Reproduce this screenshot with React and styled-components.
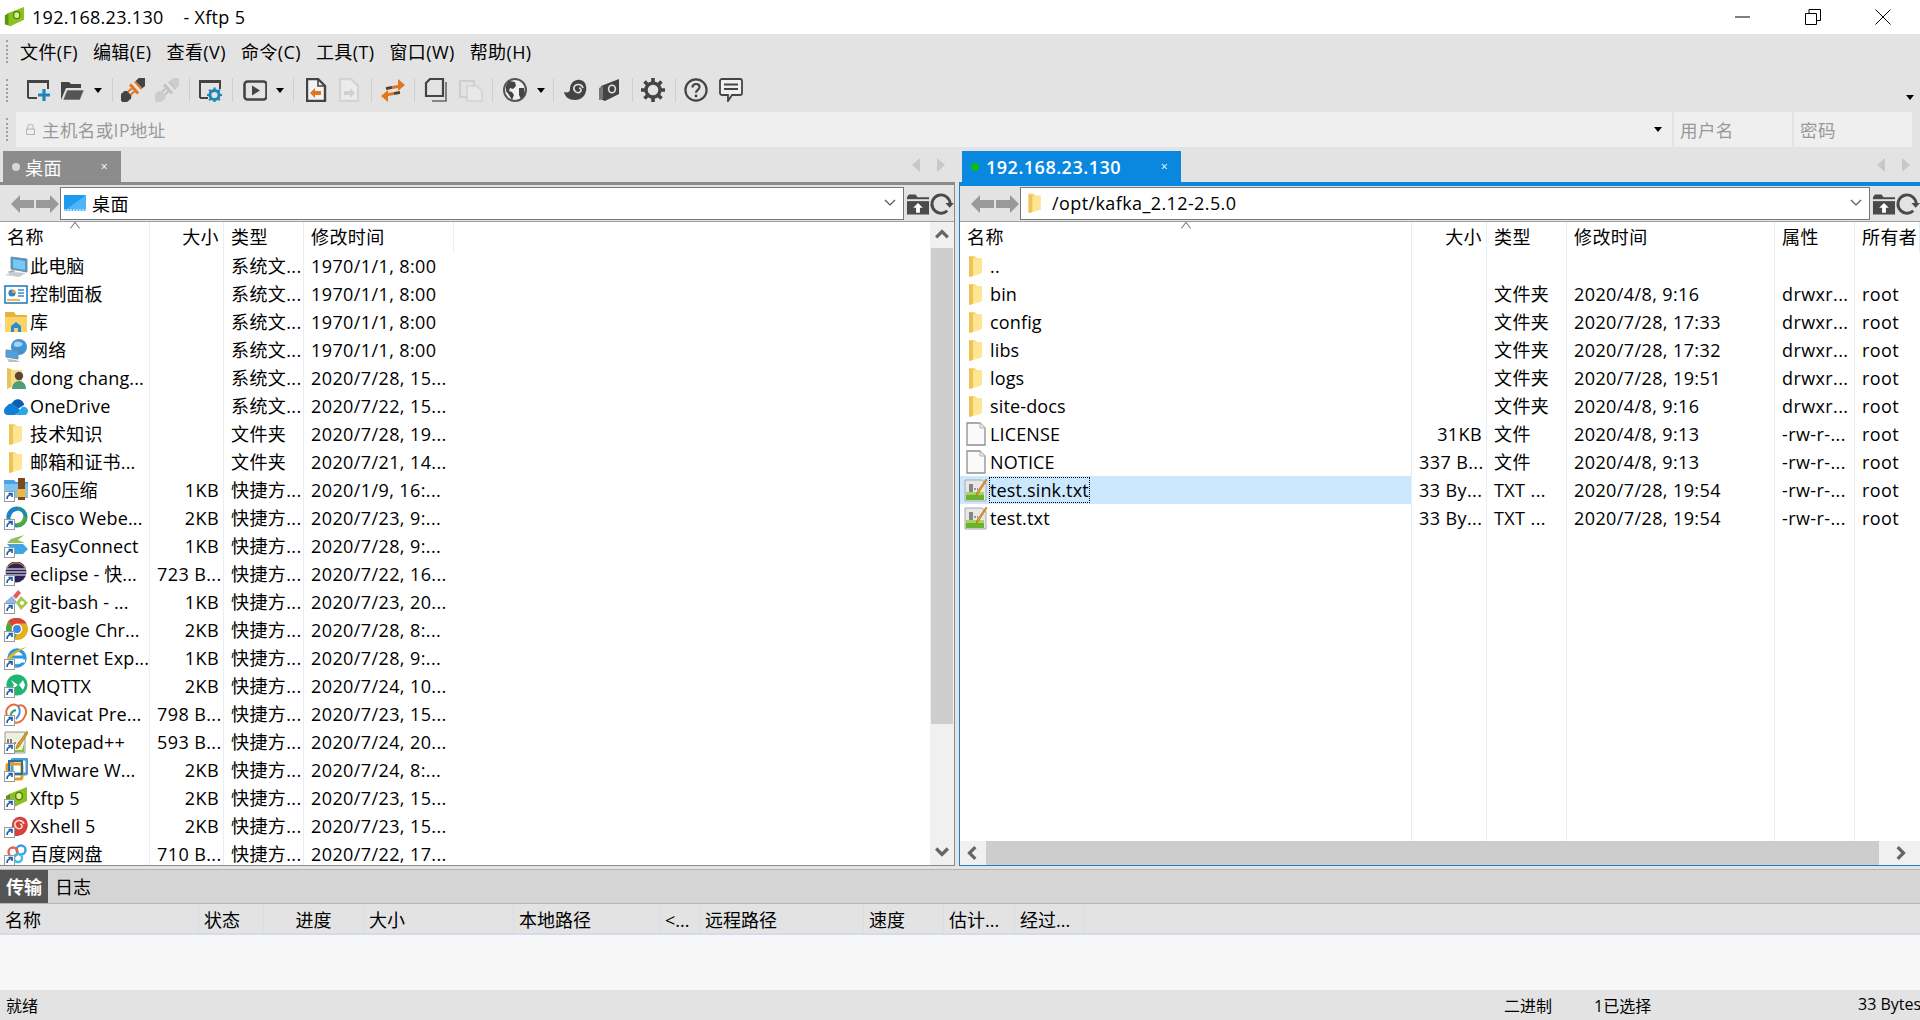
import styled, { createGlobalStyle } from "styled-components"

const GlobalStyle = createGlobalStyle`
  html, body { margin: 0; padding: 0; background: #e3e3e3; }
  body {
    font-family: "Open Sans", "Noto Sans CJK SC", sans-serif;
    font-size: 18px;
    letter-spacing: 0.4px;
    color: #000;
  }
  * { box-sizing: border-box; }
`

const DARK = "#444"
const ORANGE = "#e0771f"
const BLUE = "#1f86b8"

const plug = (body, accent) => (
  <g transform="rotate(-42 12 12)">
    <path d="M-3 7h8l2 2v6l-2 2h-8a3 3 0 01-1-1V8a3 3 0 011-1z" fill={body} />
    <path d="M7 10h5M7 14h5" stroke={accent} strokeWidth="2" />
    <rect x="12" y="6" width="3" height="12" fill={accent} />
    <rect x="18" y="7" width="2" height="10" fill={accent} />
    <path d="M20 7h5a4 4 0 014 4v2a4 4 0 01-4 4h-5z" fill={body} />
  </g>
)

/* ---- toolbar icons ---- */
const toolIcons = {
  newWin: (
    <>
      <path d="M2 20V3h20v8M2 20h9" fill="none" stroke={DARK} strokeWidth="2" />
      <rect x="2" y="2" width="20" height="3" fill={DARK} />
      <path d="M18 11v12M12 17h12" stroke={BLUE} strokeWidth="3.2" />
    </>
  ),
  open: (
    <>
      <path d="M1 22V4h8l2 2h10v4H6L1 22z" fill={DARK} />
      <path d="M3 22l4-10h17l-4 10z" fill="#555" stroke="#e3e3e3" strokeWidth=".6" />
    </>
  ),
  connect: plug(DARK, ORANGE),
  disconnect: plug("#cdcdcd", "#c2c2c2"),
  props: (
    <>
      <path d="M2 20V3h20v8M2 20h8" fill="none" stroke={DARK} strokeWidth="2" />
      <rect x="2" y="2" width="20" height="3" fill={DARK} />
      <circle cx="16.5" cy="17" r="4.6" fill="none" stroke={BLUE} strokeWidth="3" />
      <path d="M16.5 9.5v3M16.5 21.5v3M9 17h3M21 17h3M11.2 11.7l2 2M19.8 20.3l2 2M21.8 11.7l-2 2M13.2 20.3l-2 2" stroke={BLUE} strokeWidth="2.2" />
    </>
  ),
  play: (
    <>
      <rect x="1.5" y="3.5" width="22" height="18" rx="3" fill="none" stroke={DARK} strokeWidth="2.6" />
      <path d="M9 7.5l8 5-8 5z" fill={DARK} />
    </>
  ),
  fileIn: (
    <>
      <path d="M1 1h11l7 7v15H1z" fill="#f3f3f3" stroke={DARK} strokeWidth="2.4" />
      <path d="M12 1v7h7" fill="none" stroke={DARK} strokeWidth="1.6" />
      <path d="M4 15l5-5v3h6v4H9v3z" fill={ORANGE} />
    </>
  ),
  fileOut: (
    <>
      <path d="M1 1h11l7 7v15H1z" fill="#ececec" stroke="#d4d4d4" strokeWidth="2.4" />
      <path d="M16 15l-5-5v3H5v4h6v3z" fill="#d0d0d0" />
    </>
  ),
  transfer: (
    <>
      <path d="M5 9l12-2V1l7 6-7 6v-3L5 12z" fill={ORANGE} />
      <path d="M19 13L7 15v-3l-7 6 7 6v-6l12-2z" fill={ORANGE} />
      <path d="M5 10.500l6-1M13 15.500l6-1" stroke={DARK} strokeWidth="2.400" />
    </>
  ),
  copy: (
    <>
      <path d="M22 4v19H8" fill="none" stroke="#666" strokeWidth="1.6" />
      <path d="M2 5l4-4h13v17H2z" fill="none" stroke={DARK} strokeWidth="2.2" />
    </>
  ),
  paste: (
    <>
      <path d="M1 3h14v16H1z" fill="none" stroke="#cfcfcf" strokeWidth="2.2" />
      <path d="M8 8h10l5 5v10H8z" fill="#e9e9e9" stroke="#d2d2d2" strokeWidth="1.6" />
    </>
  ),
  globe: (
    <>
      <circle cx="12" cy="12" r="11" fill="#f0f0f0" stroke="#555" strokeWidth="2" />
      <path d="M6 3l6 1 1 4-3 3-3-1-1 3 3 1 2 3-2 5-3-5-3-4 0-5zM16 10l5 0 1 6-4 5-2-4z" fill={DARK} />
    </>
  ),
  shell: (
    <>
      <path d="M1 14c4 1 6 0 6-3 0-6 5-10 10-9 6 1 7 7 6 11-1 6-6 9-11 9-6 0-10-3-11-8z" fill={DARK} />
      <path d="M20 10c-1-4-7-5-9-1-1 4 3 7 6 5 2-1 1-4-1-4" fill="none" stroke="#e3e3e3" strokeWidth="1.6" />
    </>
  ),
  leaf: (
    <>
      <path d="M3 8l18-7v15L7 23l-5-2z" fill={DARK} />
      <path d="M1 10l4-2v13l-4 1z" fill="#777" />
      <ellipse cx="14" cy="11" rx="3.4" ry="3.8" fill="none" stroke="#e3e3e3" strokeWidth="1.6" />
    </>
  ),
  gear: (
    <>
      <circle cx="12" cy="12" r="7" fill="none" stroke={DARK} strokeWidth="3.4" />
      <path d="M12 0v5M12 19v5M0 12h5M19 12h5M3.5 3.5l3.5 3.5M17 17l3.5 3.5M20.5 3.5L17 7M7 17l-3.5 3.5" stroke={DARK} strokeWidth="3.6" />
    </>
  ),
  help: (
    <>
      <circle cx="12" cy="12" r="10.6" fill="none" stroke={DARK} strokeWidth="2.2" />
      <path d="M8.5 9.5c0-2.4 1.6-3.5 3.6-3.5s3.4 1.2 3.4 3c0 2.8-3.5 2.8-3.5 5.8" fill="none" stroke={DARK} strokeWidth="2.2" />
      <circle cx="12" cy="18" r="1.4" fill={DARK} />
    </>
  ),
  chat: (
    <>
      <path d="M3 1h18a2 2 0 012 2v12a2 2 0 01-2 2h-8l-4 6v-6H3a2 2 0 01-2-2V3a2 2 0 012-2z" fill="#f0f0f0" stroke={DARK} strokeWidth="1.8" />
      <path d="M5 6.5h14M5 11h14" stroke={DARK} strokeWidth="1.8" />
    </>
  ),
}

/* ---- file list icons ---- */
const fileIcons = {
  computer: (
    <>
      <path d="M7 3l16 2v13l-16-3z" fill="#3d9ad8" stroke="#8a8f96" />
      <path d="M9 5l12 2v9L9 14z" fill="#7cc7f2" />
      <path d="M1 21l8-3 13 1-7 4z" fill="#c7cbd0" />
      <path d="M3 18l6-2 3 1-6 2z" fill="#a9aeb4" />
    </>
  ),
  panel: (
    <>
      <rect x="1" y="4" width="22" height="17" fill="#fff" stroke="#2a7fbe" strokeWidth="1.6" />
      <circle cx="8" cy="11" r="3.6" fill="#2a85cc" />
      <path d="M8 11V7.4A3.6 3.6 0 0111.6 11z" fill="#f0a030" />
      <path d="M14 8h6M14 11h6M14 14h6" stroke="#3a8fd0" strokeWidth="1.5" />
      <path d="M3 18h13" stroke="#f0a030" strokeWidth="1.6" />
    </>
  ),
  library: (
    <>
      <path d="M1 2h9l2 3h11v17H1z" fill="#e9b23c" />
      <rect x="1" y="7" width="22" height="15" fill="#fbd466" />
      <path d="M7 16l5-4 5 4v6H7z" fill="#2b8ad8" />
      <rect x="10" y="18" width="4" height="4" fill="#fbd466" />
    </>
  ),
  network: (
    <>
      <circle cx="15" cy="9" r="8" fill="#3f93d6" />
      <path d="M10 5c3-2 6-2 9 1-2 3-6 4-9 2z" fill="#a5d4f2" />
      <path d="M2 12l12 1v8L2 19z" fill="#4aa3df" stroke="#7d8b96" />
      <path d="M3 21l9 1 4 2H5z" fill="#b9bec4" />
    </>
  ),
  user: (
    <>
      <path d="M3 2l6 2h9v14L3 23z" fill="#f9dd85" />
      <path d="M3 2l4 1v18l-4 2z" fill="#e8c25c" />
      <circle cx="15" cy="10" r="4.2" fill="#5b4435" />
      <path d="M8 23c0-5 3-8 7-8s7 3 7 8z" fill="#4f9e7b" />
    </>
  ),
  onedrive: (
    <>
      <path d="M8 9c2-4 7-5 10-2 2 2 2 3 2 4l-8 5-6-3z" fill="#0a5fb4" />
      <path d="M3 12c1-2 4-3 6-2l4 3 4 4-6 4H4c-3 0-4-2-4-4s1-4 3-5z" fill="#0f7fd4" />
      <path d="M12 21l6-8c2-1 5 0 6 3 0 3-1 5-4 5z" fill="#2aa7e8" />
    </>
  ),
  folder: (
    <>
      <path d="M5 2h5l3 2h5v15L5 23z" fill="#f7d36e" />
      <path d="M9 4h9v15L9 22z" fill="#fde594" />
      <path d="M5 2l4 2v18l-4 1z" fill="#eec255" />
    </>
  ),
  file: (
    <>
      <path d="M3 1h13l5 5v17H3z" fill="#fafafa" stroke="#8f8f8f" strokeWidth="1.3" />
      <path d="M16 1v5h5" fill="#eee" stroke="#b0b0b0" />
    </>
  ),
  notepad: (
    <>
      <path d="M1 2h17l4 3v18H1z" fill="#e8e8e8" stroke="#a8a8a8" />
      <rect x="2" y="14" width="18" height="8" fill="#6bb32e" />
      <path d="M2 14h18v3H2z" fill="#a7d65e" />
      <path d="M6 6v8M8 6v8M10 11h2M13 11h1" stroke="#444" strokeWidth="1.2" />
      <path d="M22 1l1 1-9 14-2 1 1-3z" fill="#e89a23" stroke="#a86a10" strokeWidth=".6" />
    </>
  ),
  zip: (
    <>
      <path d="M0 2h10l2 2h12v16H0z" fill="#4ba3e3" />
      <path d="M0 6h24v14H0z" fill="#7cc4f2" />
      <rect x="14" y="0" width="7" height="22" fill="#7d4a1e" />
      <rect x="13" y="11" width="9" height="8" fill="#e8b64a" />
    </>
  ),
  webex: (
    <>
      <circle cx="13" cy="11" r="8.6" fill="none" stroke="#1f8f9e" strokeWidth="4" />
      <path d="M5 11a8 8 0 018-8" fill="none" stroke="#1e7fd0" strokeWidth="4" />
      <path d="M21 11a8 8 0 01-8 8" fill="none" stroke="#5aa92f" strokeWidth="4" />
    </>
  ),
  easy: (
    <>
      <path d="M20 1L7 5l-4 4h18L14 6z" fill="#8fc25a" />
      <path d="M3 10h16l5 5-5 5H3l4-5z" fill="#3fa6e6" />
    </>
  ),
  eclipse: (
    <>
      <circle cx="12" cy="10" r="10.5" fill="#2c2255" />
      <path d="M2 7h20M1.5 10h21M2 13h20" stroke="#fff" strokeWidth="1.2" />
      <path d="M3 6a10.500 10.500 0 0118 0" fill="none" stroke="#f7941e" strokeWidth="1" />
    </>
  ),
  git: (
    <>
      <path d="M14 0l3 3-5 6-3-3z" fill="#e85a5a" />
      <path d="M17 6l7 7-7 7-5-7z" fill="#a5c94a" />
      <path d="M8 6l5 6-6 6-6-6z" fill="#8fb8e8" />
      <circle cx="18" cy="13" r="2" fill="#fff" />
    </>
  ),
  chrome: (
    <>
      <circle cx="13" cy="11" r="11" fill="#e5b020" />
      <path d="M13 0a11 11 0 019.500 5.500H13a5.500 5.500 0 00-5 3L4 3a11 11 0 019-3z" fill="#d84436" />
      <path d="M4 3l5 8a5 5 0 004 5l-3 6C4 20 0 14 3 6z" fill="#4aa547" />
      <circle cx="13" cy="11" r="4.600" fill="#3d86e8" stroke="#fff" strokeWidth="1.4" />
    </>
  ),
  ie: (
    <>
      <circle cx="13" cy="12" r="8" fill="none" stroke="#2a9be0" strokeWidth="3.4" />
      <path d="M7 11h13" stroke="#2a9be0" strokeWidth="3" />
      <path d="M21 15h-6" stroke="#fff" strokeWidth="3" />
      <path d="M3 18C0 10 14 2 24 1 20 2 8 8 5 16" fill="#e8b022" />
    </>
  ),
  mqttx: (
    <>
      <circle cx="13" cy="11" r="10.600" fill="#21b573" />
      <path d="M7 6l7 5-7 5 3-5zM19 6l-4 5 4 5 2-5z" fill="#fff" />
    </>
  ),
  navicat: (
    <>
      <path d="M3 14C0 6 8 0 14 4c6-3 10 4 7 10-2 5-7 8-11 6" fill="none" stroke="#e8693d" strokeWidth="2" />
      <path d="M8 18c-3-4-1-9 4-10" fill="none" stroke="#2ea66a" strokeWidth="2" />
      <path d="M14 4c3 4 2 9-2 13" fill="none" stroke="#3a8fdb" strokeWidth="2" />
    </>
  ),
  npp: (
    <>
      <path d="M1 2h20v21H1z" fill="#ecf0dc" stroke="#9a9a9a" />
      <path d="M4 9v7M7 9v7M10 13h2M14 13h2" stroke="#333" strokeWidth="1.2" />
      <path d="M4 20h14l2-6v8H4z" fill="#8bbf3f" />
      <path d="M23 1l1 2-9 14-3 2 1-4z" fill="#e0a024" stroke="#8f6610" strokeWidth=".6" />
    </>
  ),
  vmware: (
    <>
      <rect x="8" y="1" width="15" height="15" rx="2" fill="none" stroke="#4d9bcc" strokeWidth="3" />
      <rect x="3" y="6" width="15" height="15" rx="2" fill="none" stroke="#e89a23" strokeWidth="3" />
      <rect x="5" y="3" width="13" height="13" fill="none" stroke="#286f9e" strokeWidth="2" />
    </>
  ),
  xftp: (
    <>
      <path d="M5 8l18-7v14L8 22 2 20z" fill="#8cc21f" />
      <path d="M2 10l4-2v13l-4-1z" fill="#5d9412" />
      <ellipse cx="15" cy="10" rx="3.400" ry="3.800" fill="#d9ee8d" stroke="#4f7d0e" strokeWidth="1.400" />
    </>
  ),
  xshell: (
    <>
      <path d="M2 15c4 1 6 0 6-4 0-6 5-9 10-8s7 7 5 12c-2 5-6 7-11 7-6 0-9-3-10-7z" fill="#d6423a" />
      <path d="M20 10c-1-4-7-5-9-1-1 4 3 7 6 5 2-1 1-4-1-4" fill="none" stroke="#fbe0dc" strokeWidth="1.500" />
    </>
  ),
  baidu: (
    <>
      <circle cx="17" cy="8" r="4.500" fill="none" stroke="#3a9af0" strokeWidth="2.400" />
      <circle cx="9" cy="10" r="4.500" fill="none" stroke="#e8604c" strokeWidth="2.400" />
      <circle cx="14" cy="16" r="4" fill="none" stroke="#3ac0e8" strokeWidth="2.400" />
    </>
  ),
}

const Shortcut = () => (
  <>
    <rect x="0.500" y="13.500" width="10" height="10" fill="#fff" stroke="#9a9a9a" />
    <path d="M3 21c0-3 1-4 4-4.500M4.500 15.500h3.500v3.500" fill="none" stroke="#1d5fb0" strokeWidth="1.700" />
  </>
)

const FileIcon = ({ name, link }) => (
  <IconBox viewBox="0 0 24 24" width="24" height="24">
    {fileIcons[name]}
    {link && <Shortcut />}
  </IconBox>
)

const leftRows = [
  ["computer", "此电脑", "", "系统文...", "1970/1/1, 8:00"],
  ["panel", "控制面板", "", "系统文...", "1970/1/1, 8:00"],
  ["library", "库", "", "系统文...", "1970/1/1, 8:00"],
  ["network", "网络", "", "系统文...", "1970/1/1, 8:00"],
  ["user", "dong chang...", "", "系统文...", "2020/7/28, 15..."],
  ["onedrive", "OneDrive", "", "系统文...", "2020/7/22, 15..."],
  ["folder", "技术知识", "", "文件夹", "2020/7/28, 19..."],
  ["folder", "邮箱和证书...", "", "文件夹", "2020/7/21, 14..."],
  ["zip", "360压缩", "1KB", "快捷方...", "2020/1/9, 16:..."],
  ["webex", "Cisco Webe...", "2KB", "快捷方...", "2020/7/23, 9:..."],
  ["easy", "EasyConnect", "1KB", "快捷方...", "2020/7/28, 9:..."],
  ["eclipse", "eclipse - 快...", "723 B...", "快捷方...", "2020/7/22, 16..."],
  ["git", "git-bash - ...", "1KB", "快捷方...", "2020/7/23, 20..."],
  ["chrome", "Google Chr...", "2KB", "快捷方...", "2020/7/28, 8:..."],
  ["ie", "Internet Exp...", "1KB", "快捷方...", "2020/7/28, 9:..."],
  ["mqttx", "MQTTX", "2KB", "快捷方...", "2020/7/24, 10..."],
  ["navicat", "Navicat Pre...", "798 B...", "快捷方...", "2020/7/23, 15..."],
  ["npp", "Notepad++", "593 B...", "快捷方...", "2020/7/24, 20..."],
  ["vmware", "VMware W...", "2KB", "快捷方...", "2020/7/24, 8:..."],
  ["xftp", "Xftp 5", "2KB", "快捷方...", "2020/7/23, 15..."],
  ["xshell", "Xshell 5", "2KB", "快捷方...", "2020/7/23, 15..."],
  ["baidu", "百度网盘", "710 B...", "快捷方...", "2020/7/22, 17..."],
]

const rightRows = [
  ["folder", "..", "", "", "", "", ""],
  ["folder", "bin", "", "文件夹", "2020/4/8, 9:16", "drwxr...", "root"],
  ["folder", "config", "", "文件夹", "2020/7/28, 17:33", "drwxr...", "root"],
  ["folder", "libs", "", "文件夹", "2020/7/28, 17:32", "drwxr...", "root"],
  ["folder", "logs", "", "文件夹", "2020/7/28, 19:51", "drwxr...", "root"],
  ["folder", "site-docs", "", "文件夹", "2020/4/8, 9:16", "drwxr...", "root"],
  ["file", "LICENSE", "31KB", "文件", "2020/4/8, 9:13", "-rw-r-...", "root"],
  ["file", "NOTICE", "337 B...", "文件", "2020/4/8, 9:13", "-rw-r-...", "root"],
  ["notepad", "test.sink.txt", "33 By...", "TXT ...", "2020/7/28, 19:54", "-rw-r-...", "root"],
  ["notepad", "test.txt", "33 By...", "TXT ...", "2020/7/28, 19:54", "-rw-r-...", "root"],
]

const tools = [
  ["newWin", 0], ["open", 10], ["dd", 10], ["sep", 10], ["connect", 8], ["disconnect", 10], ["sep", 10],
  ["props", 8], ["sep", 10], ["play", 10], ["dd", 9], ["sep", 9], ["fileIn", 12], ["fileOut", 9], ["sep", 8],
  ["transfer", 9], ["sep", 9], ["copy", 9], ["paste", 11], ["sep", 9], ["globe", 10], ["dd", 10], ["sep", 8],
  ["shell", 9], ["leaf", 11], ["sep", 10], ["gear", 8], ["sep", 10], ["help", 8], ["chat", 11],
]

const menus = ["文件(F)", "编辑(E)", "查看(V)", "命令(C)", "工具(T)", "窗口(W)", "帮助(H)"]

const LEFT_COLS = "150px 74px 80px 150px 1fr"
const RIGHT_COLS = "452px 75px 80px 208px 80px 65px"

const transferCols = [
  ["名称", 199], ["状态", 65], ["进度", 100, true], ["大小", 150], ["本地路径", 146],
  ["<...", 40], ["远程路径", 164], ["速度", 80], ["估计...", 71], ["经过...", 69],
]

function PathArrows() {
  return (
    <ArrowsSvg viewBox="0 0 48 20" width="48" height="20">
      <path d="M0 10L9 1v5h14v8H9v5z" fill="#999" />
      <path d="M48 10l-9-9v5H25v8h14v5z" fill="#999" />
    </ArrowsSvg>
  )
}

function FolderTools() {
  return (
    <svg viewBox="0 0 50 26" width="48" height="26">
      <path d="M1 24V6l2-3h7l2 3h12v18z" fill="#4a4a4a" />
      <path d="M1 8h23v2H1z" fill="#e3e3e3" />
      <path d="M12.500 12l5 5h-3v5h-4v-5h-3z" fill="#fff" />
      <path d="M46 13a9.500 9.500 0 10-3 7" fill="none" stroke="#4a4a4a" strokeWidth="3" />
      <path d="M41 12h9l-4.500 5z" fill="#4a4a4a" />
    </svg>
  )
}

function Chevron({ dir }) {
  const d = { up: "M1 8l5-5 5 5", down: "M1 3l5 5 5-5", left: "M8 1L3 6l5 5", right: "M4 1l5 5-5 5" }[dir]
  return (
    <svg viewBox="0 0 12 12" width="14" height="14">
      <path d={d} fill="none" stroke="#666" strokeWidth="2.800" />
    </svg>
  )
}

function TabArrows() {
  return (
    <TabNav>
      <svg viewBox="0 0 8 14" width="8" height="14"><path d="M8 0v14L0 7z" fill="#c8c8c8" /></svg>
      <svg viewBox="0 0 8 14" width="8" height="14"><path d="M0 0v14l8-7z" fill="#c8c8c8" /></svg>
    </TabNav>
  )
}

function Combo({ icon, text }) {
  return (
    <ComboBox>
      {icon}
      <ComboText>{text}</ComboText>
      <ComboArrow viewBox="0 0 12 8" width="12" height="8">
        <path d="M1 1l5 5 5-5" fill="none" stroke="#555" strokeWidth="1.200" />
      </ComboArrow>
    </ComboBox>
  )
}

export default function App() {
  return (
    <Window>
      <GlobalStyle />
      <TitleBar>
        <TitleIcon viewBox="0 0 24 24" width="22" height="22">
          {fileIcons.xftp}
        </TitleIcon>
        <TitleText>192.168.23.130    - Xftp 5</TitleText>
        <WinControls>
          <WinBtn viewBox="0 0 16 16"><path d="M0 8h15" stroke="#000" strokeWidth="1" /></WinBtn>
          <WinBtn viewBox="0 0 16 16"><path d="M.5 4.500h11v11H.5zM4 4.500V.5h11.500v11H11.500" fill="none" stroke="#000" /></WinBtn>
          <WinBtn viewBox="0 0 16 16"><path d="M.5.5l15 15M15.500.5l-15 15" stroke="#000" /></WinBtn>
        </WinControls>
      </TitleBar>

      <MenuBar>
        <Gripper />
        <MenuList>
          {menus.map((m) => <MenuItem key={m}>{m}</MenuItem>)}
        </MenuList>
      </MenuBar>

      <Toolbar>
        <Gripper />
        <ToolRow>
          {tools.map(([k, ml], i) => {
            if (k === "sep") return <ToolSep key={i} $ml={ml} />
            if (k === "dd") return <DropCaret key={i} $ml={ml} />
            return (
              <ToolIcon key={i} $ml={ml} viewBox="0 0 24 24" width="24" height="24">
                {toolIcons[k]}
              </ToolIcon>
            )
          })}
        </ToolRow>
        <OverflowCaret />
      </Toolbar>

      <AddressBar>
        <Gripper />
        <HostField>
          <svg viewBox="0 0 10 12" width="9" height="11">
            <path d="M2 5V3a3 3 0 016 0v2M.5 5.500h9v6h-9z" fill="none" stroke="#aaa" />
          </svg>
          <HostText>主机名或IP地址</HostText>
          <HostCaret />
        </HostField>
        <CredField $w={118}>用户名</CredField>
        <CredField $w={118}>密码</CredField>
      </AddressBar>

      <Panes>
        <Pane $w={955}>
          <TabRow>
            <Tab $w={118}>
              <TabDot />
              <TabLabel>桌面</TabLabel>
              <TabClose>×</TabClose>
            </Tab>
            <TabArrows />
          </TabRow>
          <Frame>
            <PathBar>
              <PathArrows />
              <Combo
                text="桌面"
                icon={
                  <svg viewBox="0 0 22 16" width="22" height="16">
                    <rect width="22" height="16" fill="#1e9bf0" />
                    <path d="M0 16L22 0v16z" fill="#4db4f7" />
                    <path d="M0 15h22" stroke="#fff" strokeDasharray="2 1" />
                  </svg>
                }
              />
              <FolderTools />
            </PathBar>
            <ListWrap>
              <List>
                <HeaderRow $cols={LEFT_COLS}>
                  <Cell>名称</Cell>
                  <Cell $right>大小</Cell>
                  <Cell>类型</Cell>
                  <Cell>修改时间</Cell>
                  <SortMark $x={71} />
                </HeaderRow>
                {leftRows.map(([icon, name, size, type, time], i) => (
                  <Row key={i} $cols={LEFT_COLS}>
                    <NameCell>
                      <FileIcon name={icon} link={type === "快捷方..."} />
                      <NameLabel>{name}</NameLabel>
                    </NameCell>
                    <Cell $right>{size}</Cell>
                    <Cell>{type}</Cell>
                    <Cell>{time}</Cell>
                  </Row>
                ))}
              </List>
              <VScroll>
                <ScrollBtn><Chevron dir="up" /></ScrollBtn>
                <VThumb />
                <VTrack />
                <ScrollBtn><Chevron dir="down" /></ScrollBtn>
              </VScroll>
            </ListWrap>
          </Frame>
        </Pane>

        <Pane $w={961} $active>
          <TabRow>
            <Tab $w={219} $active>
              <TabDot $active />
              <TabLabel $active>192.168.23.130</TabLabel>
              <TabClose>×</TabClose>
            </Tab>
            <TabArrows />
          </TabRow>
          <Frame $active>
            <PathBar>
              <PathArrows />
              <Combo
                text="/opt/kafka_2.12-2.5.0"
                icon={
                  <svg viewBox="0 0 24 24" width="22" height="22">
                    {fileIcons.folder}
                  </svg>
                }
              />
              <FolderTools />
            </PathBar>
            <RightBody>
              <List>
                <HeaderRow $cols={RIGHT_COLS}>
                  <Cell>名称</Cell>
                  <Cell $right>大小</Cell>
                  <Cell>类型</Cell>
                  <Cell>修改时间</Cell>
                  <Cell>属性</Cell>
                  <Cell>所有者</Cell>
                  <SortMark $x={222} />
                </HeaderRow>
                {rightRows.map(([icon, name, size, type, time, attr, owner]) => (
                  <Row key={name} $cols={RIGHT_COLS}>
                    <NameCell $selected={name === "test.sink.txt"}>
                      <FileIcon name={icon} />
                      <NameLabel $focus={name === "test.sink.txt"}>{name}</NameLabel>
                    </NameCell>
                    <Cell $right>{size}</Cell>
                    <Cell>{type}</Cell>
                    <Cell>{time}</Cell>
                    <Cell>{attr}</Cell>
                    <Cell>{owner}</Cell>
                  </Row>
                ))}
                <FillerRow $cols={RIGHT_COLS}>
                  <Cell /><Cell /><Cell /><Cell /><Cell /><Cell />
                </FillerRow>
              </List>
              <HScroll>
                <ScrollBtn $h><Chevron dir="left" /></ScrollBtn>
                <HThumb />
                <ScrollBtn $h $wide><Chevron dir="right" /></ScrollBtn>
              </HScroll>
            </RightBody>
          </Frame>
        </Pane>
      </Panes>

      <TransferTabs>
        <TransferTab $active>传输</TransferTab>
        <TransferTab>日志</TransferTab>
      </TransferTabs>
      <TransferHeader>
        {transferCols.map(([label, w, center]) => (
          <TransferCol key={label} $w={w} $center={center}>{label}</TransferCol>
        ))}
      </TransferHeader>
      <TransferBody />

      <StatusBar>
        <StatusText>就绪</StatusText>
        <StatusRight>
          <StatusCell $w={90}>二进制</StatusCell>
          <StatusCell $w={264}>1已选择</StatusCell>
          <StatusCell $w={62}>33 Bytes</StatusCell>
        </StatusRight>
      </StatusBar>
    </Window>
  )
}

const Window = styled.div`
  width: 1920px;
  height: 1020px;
  display: flex;
  flex-direction: column;
  overflow: hidden;
  background: #e3e3e3;
`

const TitleBar = styled.div`
  height: 34px;
  flex: none;
  background: #fff;
  display: flex;
  align-items: center;
  padding-left: 3px;
`

const TitleIcon = styled.svg`
  flex: none;
`

const TitleText = styled.div`
  margin-left: 7px;
  font-size: 18px;
  line-height: 34px;
  white-space: pre;
  letter-spacing: 0.3px;
`

const WinControls = styled.div`
  margin-left: auto;
  display: flex;
  align-items: center;
  gap: 54px;
  padding-right: 29px;
`

const WinBtn = styled.svg`
  width: 16px;
  height: 16px;
  display: block;
`

const MenuBar = styled.div`
  height: 34px;
  flex: none;
  display: flex;
  align-items: center;
  padding-left: 6px;
`

const Gripper = styled.div`
  width: 2px;
  height: 23px;
  flex: none;
  border-left: 2px dotted #a0a0a0;
`

const MenuList = styled.div`
  display: flex;
  gap: 15px;
  margin-left: 12px;
  padding-top: 2px;
`

const MenuItem = styled.div`
  font-size: 18px;
  line-height: 32px;
  white-space: nowrap;
`

const Toolbar = styled.div`
  height: 44px;
  flex: none;
  display: flex;
  align-items: center;
  padding-left: 6px;
  position: relative;
`

const ToolRow = styled.div`
  display: flex;
  align-items: center;
  margin-left: 18px;
`

const ToolIcon = styled.svg`
  flex: none;
  margin-left: ${(p) => p.$ml}px;
`

const ToolSep = styled.div`
  width: 1px;
  height: 24px;
  flex: none;
  background: #cfcfcf;
  margin-left: ${(p) => p.$ml}px;
`

const DropCaret = styled.div`
  flex: none;
  width: 0;
  height: 0;
  margin-left: ${(p) => p.$ml}px;
  border-left: 4px solid transparent;
  border-right: 4px solid transparent;
  border-top: 5px solid #000;
`

const OverflowCaret = styled(DropCaret)`
  position: absolute;
  right: 6px;
  bottom: 12px;
`

const AddressBar = styled.div`
  height: 35px;
  flex: none;
  display: flex;
  align-items: stretch;
  gap: 2px;
  padding-left: 6px;
  padding-right: 8px;

  & > ${Gripper} {
    align-self: center;
    margin-right: 6px;
  }
`

const HostField = styled.div`
  flex: 1;
  background: #efefef;
  display: flex;
  align-items: center;
  padding-left: 10px;
`

const HostText = styled.span`
  margin-left: 7px;
  color: #999;
  font-size: 17.500px;
`

const HostCaret = styled(DropCaret)`
  margin-left: auto;
  margin-right: 10px;
`

const CredField = styled.div`
  width: ${(p) => p.$w}px;
  flex: none;
  background: #efefef;
  color: #999;
  font-size: 17.500px;
  line-height: 36px;
  padding-left: 6px;
`

const Panes = styled.div`
  height: 719px;
  flex: none;
  display: flex;
  justify-content: space-between;
`

const Pane = styled.div`
  width: ${(p) => p.$w}px;
  display: flex;
  flex-direction: column;
`

const TabRow = styled.div`
  height: 35px;
  flex: none;
  display: flex;
  align-items: flex-end;
  justify-content: space-between;
  padding-left: 3px;
  padding-right: 10px;
`

const Tab = styled.div`
  width: ${(p) => p.$w}px;
  height: 31px;
  background: ${(p) => (p.$active ? "#0a88e0" : "#8c8c8c")};
  color: #fff;
  display: flex;
  align-items: center;
  padding-left: 9px;
`

const TabDot = styled.div`
  width: 8px;
  height: 8px;
  border-radius: 50%;
  background: ${(p) => (p.$active ? "#0cbf0c" : "#d8d8d8")};
`

const TabLabel = styled.span`
  margin-left: ${(p) => (p.$active ? 7 : 5)}px;
  font-size: 18px;
  font-weight: ${(p) => (p.$active ? 600 : 400)};
  letter-spacing: ${(p) => (p.$active ? "0.5px" : "0.4px")};
`

const TabClose = styled.span`
  margin-left: auto;
  margin-right: 13px;
  font-size: 12px;
  line-height: 12px;
`

const TabNav = styled.div`
  display: flex;
  gap: 17px;
  align-self: center;
  padding-top: 1px;
`

const Frame = styled.div`
  flex: 1;
  min-height: 0;
  display: flex;
  flex-direction: column;
  background: #e3e3e3;
  padding-top: ${(p) => (p.$active ? "0" : "1px")};
  border-top: ${(p) => (p.$active ? "4px solid #0a88e0" : "3px solid #8a8a8a")};
  border-left: ${(p) => (p.$active ? "1px solid #1a7fc8" : "0")};
  border-right: ${(p) => (p.$active ? "0" : "1px solid #8a8a8a")};
  border-bottom: 1px solid ${(p) => (p.$active ? "#1a7fc8" : "#8a8a8a")};
`

const PathBar = styled.div`
  height: 36px;
  flex: none;
  display: flex;
  align-items: center;
  padding-left: 11px;
  border-bottom: 1px solid #a0a0a0;
`

const ArrowsSvg = styled.svg`
  flex: none;
  margin-right: 1px;
`

const ComboBox = styled.div`
  flex: 1;
  height: 33px;
  background: #fff;
  border: 1px solid #777;
  display: flex;
  align-items: center;
  padding-left: 3px;
  margin-right: 2px;
  margin-bottom: 1px;
`

const ComboText = styled.span`
  margin-left: 6px;
  font-size: 18px;
`

const ComboArrow = styled.svg`
  margin-left: auto;
  margin-right: 7px;
`

const ListWrap = styled.div`
  flex: 1;
  min-height: 0;
  display: flex;
`

const RightBody = styled.div`
  flex: 1;
  min-height: 0;
  display: flex;
  flex-direction: column;
`

const List = styled.div`
  flex: 1;
  min-width: 0;
  min-height: 0;
  display: flex;
  flex-direction: column;
  overflow: hidden;
  background: #fff;
`

const Row = styled.div`
  display: grid;
  flex: none;
  grid-template-columns: ${(p) => p.$cols};
  height: 28px;
  line-height: 28px;
  font-size: 18px;
`

const HeaderRow = styled(Row)`
  height: 30px;
  line-height: 31px;
  position: relative;
`

const FillerRow = styled(Row)`
  flex: 1;
  height: auto;
`

const Cell = styled.div`
  min-width: 0;
  padding: 0 ${(p) => (p.$right ? "4px" : "7px")} 0 7px;
  white-space: nowrap;
  overflow: hidden;
  border-right: 1px solid #e6edf7;
  text-align: ${(p) => (p.$right ? "right" : "left")};
  &:last-child { border-right: 0; }
`

const NameCell = styled(Cell)`
  display: flex;
  align-items: center;
  padding: 0 0 0 4px;
  overflow: visible;
  background: ${(p) => (p.$selected ? "#cce8ff" : "transparent")};
`

const NameLabel = styled.span`
  margin-left: 2px;
  line-height: 24px;
  letter-spacing: 0.15px;
  outline: ${(p) => (p.$focus ? "1px dotted #000" : "none")};
  outline-offset: 0;
`

const IconBox = styled.svg`
  flex: none;
`

const SortMark = styled.div`
  position: absolute;
  left: ${(p) => p.$x}px;
  top: 2px;
  width: 8px;
  height: 8px;
  border-left: 1px solid #777;
  border-top: 1px solid #777;
  transform: rotate(45deg) skew(8deg, 8deg);
`

const VScroll = styled.div`
  width: 24px;
  flex: none;
  background: #f0f0f0;
  display: flex;
  flex-direction: column;
`

const VThumb = styled.div`
  height: 476px;
  margin: 0 1px;
  background: #cdcdcd;
  flex: none;
`

const VTrack = styled.div`
  flex: 1;
`

const ScrollBtn = styled.div`
  flex: none;
  width: ${(p) => (p.$h ? (p.$wide ? "41px" : "26px") : "24px")};
  height: ${(p) => (p.$h ? "24px" : "26px")};
  display: flex;
  align-items: center;
  justify-content: center;
  background: #f0f0f0;
`

const HScroll = styled.div`
  height: 24px;
  flex: none;
  background: #f0f0f0;
  display: flex;
`

const HThumb = styled.div`
  flex: 1;
  background: #cdcdcd;
`

const TransferTabs = styled.div`
  height: 35px;
  margin-top: 3px;
  flex: none;
  display: flex;
  background: #d5d5d5;
  border-top: 1px solid #b5b5b5;
  border-bottom: 1px solid #b5b5b5;
`

const TransferTab = styled.div`
  padding: 0 ${(p) => (p.$active ? "6px" : "7px")};
  background: ${(p) => (p.$active ? "#555" : "transparent")};
  color: ${(p) => (p.$active ? "#fff" : "#000")};
  font-weight: ${(p) => (p.$active ? 700 : 400)};
  line-height: 35px;
  font-size: 18px;
  letter-spacing: 0;
`

const TransferHeader = styled.div`
  height: 31px;
  flex: none;
  display: flex;
  background: #e3e3e3;
  border-bottom: 2px solid #d3dcea;
`

const TransferCol = styled.div`
  width: ${(p) => p.$w}px;
  flex: none;
  font-size: 18px;
  line-height: 32px;
  padding: 0 5px;
  white-space: nowrap;
  letter-spacing: 0;
  text-align: ${(p) => (p.$center ? "center" : "left")};
  border-right: 1px solid #d5dde8;
`

const TransferBody = styled.div`
  height: 55px;
  flex: none;
  background: #f7f7f7;
`

const StatusBar = styled.div`
  flex: 1;
  display: flex;
  align-items: center;
  justify-content: space-between;
  padding-left: 6px;
  font-size: 16px;
  letter-spacing: 0;
`

const StatusText = styled.span``

const StatusRight = styled.div`
  display: flex;
`

const StatusCell = styled.div`
  width: ${(p) => p.$w}px;
  white-space: nowrap;
`
